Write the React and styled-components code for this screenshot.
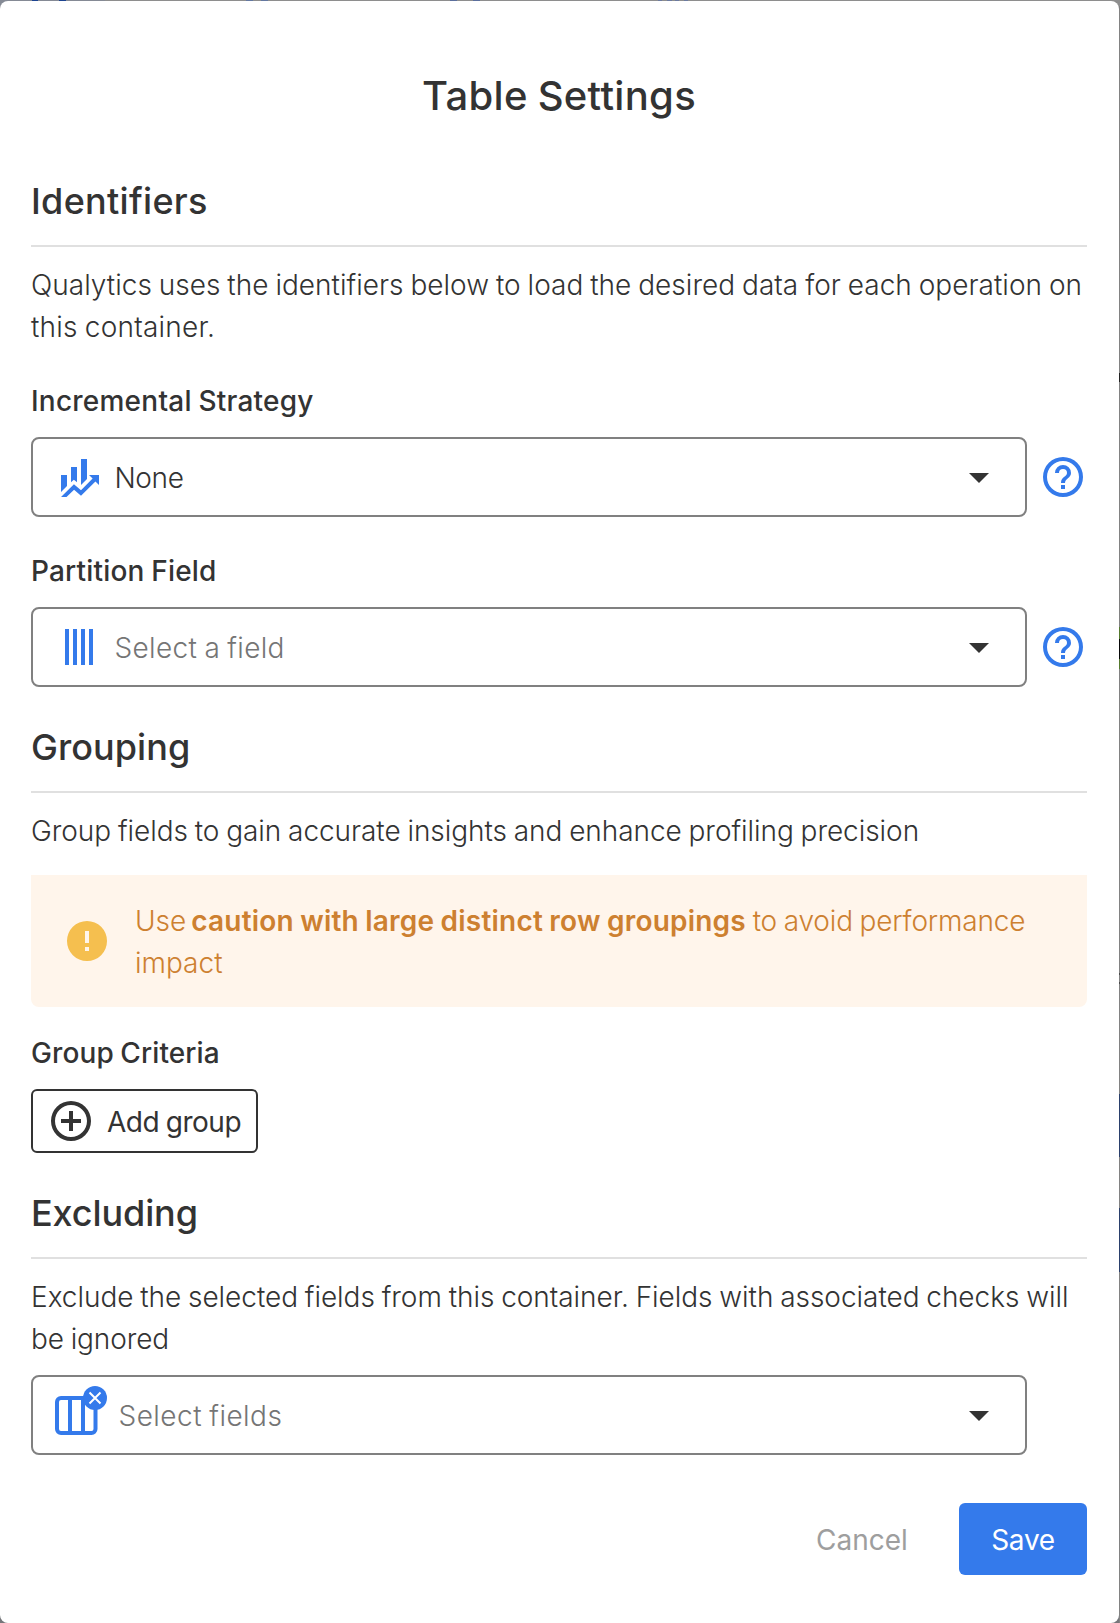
import React from "react";
import styled, { createGlobalStyle, css } from "styled-components";

const ink = "#333333";
const blue = "#347aeb";

const GlobalStyle = createGlobalStyle`
  * { box-sizing: border-box; }
  body { margin: 0; background: #828282; }
`;

const Backdrop = styled.div`
  height: 1623px;
  padding: 1px 1px 0 0;
  color: ${ink};
  font-family: Inter, "Liberation Sans", sans-serif;
  font-size: 28px;
  font-weight: 300;
  line-height: 42px;
  word-spacing: -1px;
  background:
    linear-gradient(90deg,
      #858a95 32px, #1d4490 32px 38px, #858a95 38px 59px, #1d4490 59px 66px, #858a95 66px 105px,
      #8e8e8e 105px 246px, #6478a0 246px 253px, #8e8e8e 253px 261px, #6478a0 261px 268px,
      #8e8e8e 268px 450px, #5c6f9c 450px 457px, #8e8e8e 457px 473px, #5c6f9c 473px 480px,
      #8e8e8e 480px 658px, #6c7ba0 658px 662px, #8e8e8e 662px 667px, #6c7ba0 667px 672px,
      #8e8e8e 672px 675px, #6c7ba0 675px 679px, #8e8e8e 679px 684px, #6c7ba0 684px 688px, #8e8e8e 688px)
      top / 100% 6px no-repeat,
    linear-gradient(180deg,
      #828282 373px, #222222 373px 382px, #828282 382px 627px, #557a2e 627px 639px,
      #080808 639px 659px, #557a2e 659px 669px, #828282 669px 973px, #4a4a4a 973px 975px,
      #828282 975px 982px, #4a4a4a 982px 984px, #828282 984px 1094px, #2a3f6b 1094px 1157px,
      #828282 1157px 1208px, #2a3f6b 1208px 1272px, #828282 1272px)
      right / 1px 100% no-repeat,
    #75767a;
`;

const Dialog = styled.main`
  display: flex;
  flex-direction: column;
  height: 1622px;
  padding: 65px 32px 48px 31px;
  border-radius: 8px;
  background: #fff;
`;

const Title = styled.h1`
  margin: 0 0 51px;
  font-size: 40px;
  font-weight: 500;
  line-height: 60px;
  letter-spacing: 0.3px;
  text-align: center;
`;

const Section = styled.section`
  display: flex;
  flex-direction: column;
  & + & { margin-top: 36px; }
`;

const Heading = styled.h2`
  margin: 0 0 17px;
  padding-bottom: 20px;
  border-bottom: 2px solid #e0e0e0;
  font-size: 36px;
  font-weight: 500;
  line-height: 48px;
  letter-spacing: ${(p) => p.$track}px;
`;

const Text = styled.p`
  margin: 0;
  white-space: nowrap;
`;

const Run = styled.span`
  letter-spacing: ${(p) => p.$track}px;
`;

const Strong = styled.strong`
  margin-left: -2px;
  font-weight: 600;
  letter-spacing: 0.22px;
`;

const Label = styled.div`
  margin: ${(p) => p.$top}px 0 15px;
  font-weight: 500;
  letter-spacing: ${(p) => p.$track}px;
`;

const FieldRow = styled.div`
  display: flex;
  align-items: center;
  gap: 12px;
`;

const Select = styled.div`
  display: flex;
  align-items: center;
  width: 996px;
  height: 80px;
  padding: 0 22px;
  border: 2px solid #808080;
  border-radius: 8px;
  ${(p) => p.$top && css`margin-top: ${p.$top}px;`}
`;

const Leading = styled.div`
  display: flex;
  align-items: center;
  width: ${(p) => p.$width}px;
`;

const Value = styled.span`
  flex: 1;
  padding-top: 2px;
  color: ${(p) => (p.$placeholder ? "#757575" : ink)};
  letter-spacing: ${(p) => p.$track}px;
`;

const Icon = styled.svg`
  display: block;
  flex: none;
  width: 48px;
  height: 48px;
  fill: ${(p) => p.$color || blue};
`;

const ColumnsIcon = styled.svg`
  display: block;
  flex: none;
  width: 54px;
  height: 58px;
`;

const Alert = styled.div`
  display: flex;
  align-items: center;
  gap: 24px;
  height: 132px;
  margin-top: 23px;
  padding: 2px 0 0 32px;
  border-radius: 0 0 8px 8px;
  background: #fff5eb;
  color: #cd8030;

  ${Icon} { margin-top: -2px; }
`;

const AddButton = styled.button`
  display: flex;
  align-items: center;
  gap: 12px;
  width: 227px;
  height: 64px;
  padding: 0 0 0 14px;
  border: 2px solid ${ink};
  border-radius: 6px;
  background: #fff;
  color: ${ink};
  font: inherit;
  font-weight: 400;
  letter-spacing: -0.45px;
  word-spacing: inherit;
  white-space: nowrap;
`;

const ButtonLabel = styled.span`
  padding-top: 2px;
`;

const Footer = styled.footer`
  display: flex;
  justify-content: flex-end;
  gap: 20px;
  margin-top: 48px;
`;

const Button = styled.button`
  width: ${(p) => (p.$primary ? 128 : 154)}px;
  height: 72px;
  padding: 2px 0 0;
  border: 0;
  border-radius: 6px;
  background: ${(p) => (p.$primary ? blue : "transparent")};
  color: ${(p) => (p.$primary ? "#fff" : "#9e9e9e")};
  font: inherit;
  font-weight: 400;
  letter-spacing: ${(p) => (p.$primary ? -0.3 : 0)}px;
`;

const paths = {
  finance:
    "M6,16.5L3,19.44V11H6M11,14.66L9.43,13.32L8,14.64V7H11M16,13L13,16V3H16M18.81,12.81L17,11H22V16L20.21,14.21L13,21.36L9.53,18.34L5.75,22H3L9.47,15.66L13,18.64",
  bars: "M5,3H7V21H5M9,3H11V21H9M13,3H15V21H13M17,3H19V21H17",
  caret: "M7,10L12,15L17,10H7Z",
  help: "M11,18H13V16H11V18M12,2A10,10 0 0,0 2,12A10,10 0 0,0 12,22A10,10 0 0,0 22,12A10,10 0 0,0 12,2M12,20C7.59,20 4,16.41 4,12C4,7.59 7.59,4 12,4C16.41,4 20,7.59 20,12C20,16.41 16.41,20 12,20M12,6A4,4 0 0,0 8,10H10A2,2 0 0,1 12,8A2,2 0 0,1 14,10C14,12 11,11.75 11,15H13C13,12.75 16,12.5 16,10A4,4 0 0,0 12,6Z",
  alert: "M13,13H11V7H13M13,17H11V15H13M12,2A10,10 0 0,0 2,12A10,10 0 0,0 12,22A10,10 0 0,0 22,12A10,10 0 0,0 12,2Z",
  plus: "M12,20C7.59,20 4,16.41 4,12C4,7.59 7.59,4 12,4C16.41,4 20,7.59 20,12C20,16.41 16.41,20 12,20M12,2A10,10 0 0,0 2,12A10,10 0 0,0 12,22A10,10 0 0,0 22,12A10,10 0 0,0 12,2M13,7H11V11H7V13H11V17H13V13H17V11H13V7Z",
};

function Glyph({ name, color }) {
  return (
    <Icon viewBox="0 0 24 24" $color={color} aria-hidden="true">
      <path d={paths[name]} />
    </Icon>
  );
}

function ExcludedColumns() {
  return (
    <ColumnsIcon viewBox="0 0 54 58" aria-hidden="true">
      <g fill="none" stroke={blue} strokeWidth="4">
        <rect x="2" y="12" width="38.5" height="35" rx="4" />
        <path d="M15 12V47M28 12V47" />
      </g>
      <circle cx="40" cy="12" r="12" fill={blue} />
      <path d="M34.5 6.5L45.5 17.5M45.5 6.5L34.5 17.5" stroke="#fff" strokeWidth="2" />
    </ColumnsIcon>
  );
}

function SelectField({ icon, iconWidth = 59.5, top, track, placeholder, children }) {
  return (
    <Select $top={top}>
      <Leading $width={iconWidth}>{icon}</Leading>
      <Value $placeholder={placeholder} $track={track}>{children}</Value>
      <Glyph name="caret" color={ink} />
    </Select>
  );
}

export default function App() {
  return (
    <>
      <GlobalStyle />
      <Backdrop>
        <Dialog>
          <Title>Table Settings</Title>

          <Section>
            <Heading $track={0.3}>Identifiers</Heading>
            <Text>
              <Run $track={0.02}>Qualytics uses the identifiers below to load the desired data for each operation on</Run>
              <br />
              <Run $track={0.22}>this container.</Run>
            </Text>
            <Label $top={32} $track={0.23}>Incremental Strategy</Label>
            <FieldRow>
              <SelectField icon={<Glyph name="finance" />} track={-0.4}>None</SelectField>
              <Glyph name="help" />
            </FieldRow>
            <Label $top={33} $track={0.18}>Partition Field</Label>
            <FieldRow>
              <SelectField icon={<Glyph name="bars" />} track={0.33} placeholder>Select a field</SelectField>
              <Glyph name="help" />
            </FieldRow>
          </Section>

          <Section>
            <Heading $track={0.05}>Grouping</Heading>
            <Text>
              <Run $track={-0.05}>Group fields to gain accurate insights and enhance profiling precision</Run>
            </Text>
            <Alert>
              <Glyph name="alert" color="#f5bf4f" />
              <Text>
                Use <Strong>caution with large distinct row groupings</Strong>
                <Run $track={-0.17}> to avoid performance</Run>
                <br />
                impact
              </Text>
            </Alert>
            <Label $top={25} $track={0.1}>Group Criteria</Label>
            <AddButton>
              <Glyph name="plus" color={ink} />
              <ButtonLabel>Add group</ButtonLabel>
            </AddButton>
          </Section>

          <Section>
            <Heading $track={-0.1}>Excluding</Heading>
            <Text>
              <Run $track={-0.04}>Exclude the selected fields from this container. Fields with associated checks will</Run>
              <br />
              <Run $track={-0.1}>be ignored</Run>
            </Text>
            <SelectField icon={<ExcludedColumns />} iconWidth={63.5} top={15} track={0.46} placeholder>
              Select fields
            </SelectField>
          </Section>

          <Footer>
            <Button>Cancel</Button>
            <Button $primary>Save</Button>
          </Footer>
        </Dialog>
      </Backdrop>
    </>
  );
}
